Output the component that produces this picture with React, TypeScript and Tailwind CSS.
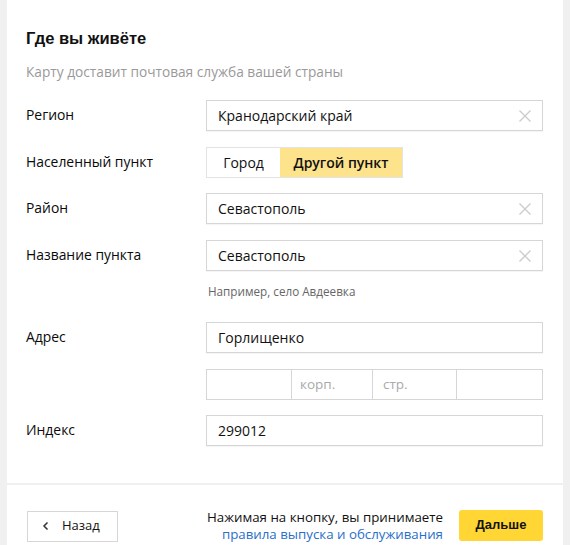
import React from "react";

const body = { fontFamily: '"Open Sans", "Liberation Sans", Arial, sans-serif' };
const arial = { fontFamily: '"Liberation Sans", Arial, sans-serif' };

function Clear() {
  return (
    <svg width="14" height="14" viewBox="0 0 14 14" className="shrink-0">
      <path d="M1.5 1.5 L12.5 12.5 M12.5 1.5 L1.5 12.5" stroke="#cccccc" strokeWidth="1.4" />
    </svg>
  );
}

function Input({ value, clear }: { value: string; clear?: boolean }) {
  return (
    <div className="flex h-[31px] w-[337px] items-center justify-between border border-[#d6d6d6] bg-white pl-[11px] pr-[10px] text-[14px] text-[#111] shadow-[0_1px_1px_rgba(0,0,0,0.04)]">
      <span>{value}</span>
      {clear && <Clear />}
    </div>
  );
}

function Row({ label, children, className = "" }: { label: string; children: React.ReactNode; className?: string }) {
  return (
    <div className={"flex items-center " + className}>
      <div className="w-[180px] text-[13.9px] text-[#0a0a0a]">{label}</div>
      {children}
    </div>
  );
}

export default function App() {
  return (
    <div className="flex h-[545px] w-[570px] bg-[#f0f0f0]" style={body}>
      <div className="ml-[7px] flex h-full w-[556px] flex-col bg-white">
        <div className="px-[19px] pt-[28px]">
          <div className="text-[16.5px] font-bold leading-[20px] text-[#111]" style={arial}>Где вы живёте</div>
          <div className="mt-[16px] text-[13.7px] leading-[16px] text-[#999]">Карту доставит почтовая служба вашей страны</div>

          <Row label="Регион" className="mt-[20px]">
            <Input value="Кранодарский край" clear />
          </Row>

          <Row label="Населенный пункт" className="mt-[16px]">
            <div className="flex h-[31px] border border-[#e3e3e3] text-[14px] font-medium text-[#111]">
              <div className="flex w-[73px] items-center justify-center bg-white">Город</div>
              <div className="flex w-[122px] items-center justify-center bg-[#fde38c] font-semibold">Другой пункт</div>
            </div>
          </Row>

          <Row label="Район" className="mt-[15px]">
            <Input value="Севастополь" clear />
          </Row>

          <Row label="Название пункта" className="mt-[16px]">
            <Input value="Севастополь" clear />
          </Row>

          <div className="mt-[13px] pl-[182px] text-[11.7px] leading-[14px] text-[#666]">Например, село Авдеевка</div>

          <Row label="Адрес" className="mt-[24px]">
            <Input value="Горлищенко" />
          </Row>

          <Row label="" className="mt-[16px]">
            <div className="flex h-[31px] w-[337px] border border-[#d6d6d6] text-[13.5px] text-[#aaa]">
              <div className="w-[85px] border-r border-[#d6d6d6]"></div>
              <div className="flex w-[81px] items-center border-r border-[#d6d6d6] pl-[8px]">корп.</div>
              <div className="flex w-[84px] items-center border-r border-[#d6d6d6] pl-[10px]">стр.</div>
              <div className="flex-1"></div>
            </div>
          </Row>

          <Row label="Индекс" className="mt-[15px]">
            <Input value="299012" />
          </Row>
        </div>

        <div className="mt-[37px] h-[2px] bg-[#f0f0f0]"></div>

        <div className="flex items-center justify-between px-[20px] pt-[24px]">
          <div className="flex h-[31px] w-[91px] items-center border border-[#d6d6d6] pl-[14px] text-[13px] text-[#111]">
            <svg width="8" height="10" viewBox="0 0 8 10" className="mr-[12px]">
              <path d="M5.5 1.5 L2 5 L5.5 8.5" stroke="#333" strokeWidth="1.5" fill="none" />
            </svg>
            Назад
          </div>
          <div className="flex items-center">
            <div className="mr-[16px] text-right text-[13.3px] leading-[17px]">
              <div className="text-[#111]">Нажимая на кнопку, вы принимаете</div>
              <div className="text-[#2a6fc9]">правила выпуска и обслуживания</div>
            </div>
            <div className="-mt-[2px] flex h-[31px] w-[84px] items-center justify-center rounded-[3px] bg-[#ffd633] text-[13px] font-bold text-[#111]" style={arial}>
              Дальше
            </div>
          </div>
        </div>
      </div>
    </div>
  );
}
